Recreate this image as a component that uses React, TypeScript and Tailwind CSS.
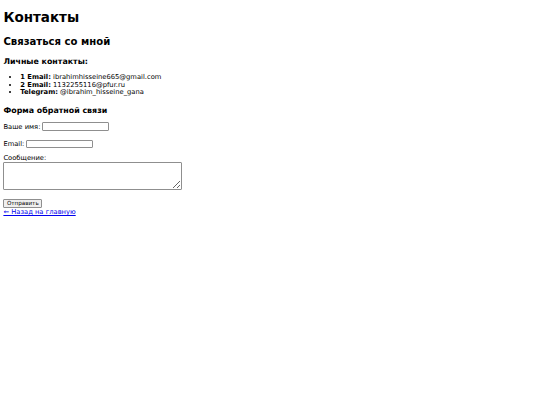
export default function App() {
  return (
    <div className="min-h-[405px] bg-white px-[3.4px] py-[0.1px] text-[6.75px] leading-[normal] text-black font-['DejaVu_Sans',sans-serif]">
      <h1 className="mt-[9px] mb-[10.5px] text-[13.5px] font-bold leading-[normal]">Контакты</h1>
      <h2 className="mt-[10.5px] mb-[10px] text-[10.1px] font-bold leading-[normal]">Связаться со мной</h2>
      <h3 className="mt-[10px] mb-[8.5px] text-[7.9px] font-bold leading-[normal]">Личные контакты:</h3>
      <ul className="mt-[8.5px] mb-[6.75px] list-disc pl-[16.9px] leading-[7.6px]">
        <li>
          <b>1 Email:</b> ibrahimhisseine665@gmail.com
        </li>
        <li>
          <b>2 Email:</b> 1132255116@pfur.ru
        </li>
        <li>
          <b>Telegram:</b> @ibrahim_hisseine_gana
        </li>
      </ul>
      <h3 className="mt-[9.4px] mb-[6.9px] text-[7.9px] font-bold leading-[normal]">Форма обратной связи</h3>
      <form>
        <p className="mt-[6.9px] mb-[8.25px] flex items-center h-[9px]">
          <label>Ваше имя:</label>
          <input type="text" className="ml-[2px] w-[67px] h-[8.5px] border border-[#8f8f8f] rounded-[1px]" />
        </p>
        <p className="mt-[8.25px] mb-[5.75px] flex items-center h-[9px]">
          <label>Email:</label>
          <input type="email" className="ml-[2px] w-[67px] h-[8.5px] border border-[#8f8f8f] rounded-[1px]" />
        </p>
        <p className="mt-[5.75px] mb-[8.75px] flex flex-col items-start">
          <label>Сообщение:</label>
          <textarea className="w-[179px] h-[28px] border border-[#8f8f8f] rounded-[1px] resize" />
        </p>
        <button
          type="button"
          className="block h-[9px] px-[2.5px] text-[5.6px] leading-[7px] border border-[#8f8f8f] rounded-[1px] bg-[#efefef]"
        >
          Отправить
        </button>
      </form>
      <a href="#" className="block text-[#0000ee] underline">
        ← Назад на главную
      </a>
    </div>
  );
}
